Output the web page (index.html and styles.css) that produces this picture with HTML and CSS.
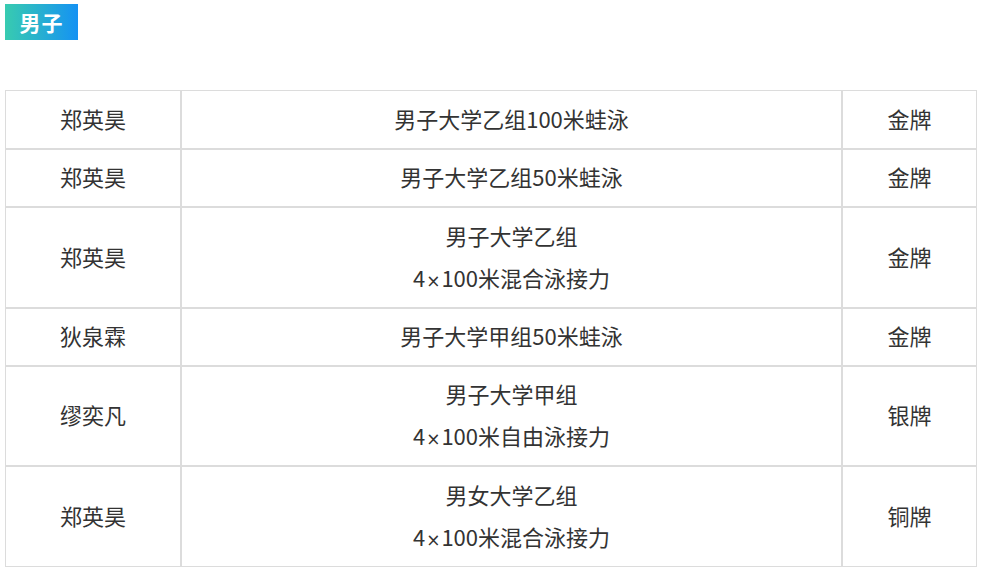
FILE: index.html
```html
<!DOCTYPE html>
<html lang="zh-CN">
<head>
<meta charset="utf-8">
<title>男子</title>
<link rel="stylesheet" href="styles.css">
</head>
<body>
<div class="badge">男子</div>
<table class="results">
  <colgroup>
    <col class="c-name">
    <col class="c-event">
    <col class="c-medal">
  </colgroup>
  <tbody>
    <tr class="r1"><td>郑英昊</td><td>男子大学乙组100米蛙泳</td><td>金牌</td></tr>
    <tr><td>郑英昊</td><td>男子大学乙组50米蛙泳</td><td>金牌</td></tr>
    <tr class="r2"><td>郑英昊</td><td>男子大学乙组<br>4<span class="x">×</span>100米混合泳接力</td><td>金牌</td></tr>
    <tr><td>狄泉霖</td><td>男子大学甲组50米蛙泳</td><td>金牌</td></tr>
    <tr><td>缪奕凡</td><td>男子大学甲组<br>4<span class="x">×</span>100米自由泳接力</td><td>银牌</td></tr>
    <tr class="r2"><td>郑英昊</td><td>男女大学乙组<br>4<span class="x">×</span>100米混合泳接力</td><td>铜牌</td></tr>
  </tbody>
</table>
</body>
</html>
```

FILE: styles.css
```css
html, body {
  margin: 0;
  padding: 0;
  background: #fff;
}
body {
  font-family: "Noto Sans CJK SC", "Noto Sans", sans-serif;
  color: #333;
}
.badge {
  margin: 4px 0 0 5px;
  width: 73px;
  height: 36px;
  box-sizing: border-box;
  background: linear-gradient(90deg, #38cbb0 0%, #1592f3 100%);
  color: #fff;
  font-weight: 700;
  font-size: 21px;
  line-height: 36px;
  text-align: center;
  letter-spacing: 1px;
}
.results {
  margin: 50px 0 0 5px;
  width: 972px;
  table-layout: fixed;
  border-collapse: separate;
  border-spacing: 0;
}
.c-name { width: 176px; }
.c-event { width: 661px; }
.c-medal { width: 135px; }
.results td {
  border: 1px solid #dcdcdc;
  padding: 5px 10px 9px;
  font-size: 22px;
  line-height: 42px;
  text-align: center;
  vertical-align: middle;
  color: #333;
}
.results .x {
  font-family: "DejaVu Sans", sans-serif;
  font-size: 17px;
  line-height: 0;
  padding: 0 1px;
}
.results tr.r1 td,
.results tr.r2 td {
  padding-top: 5.5px;
  padding-bottom: 9.5px;
}
```
